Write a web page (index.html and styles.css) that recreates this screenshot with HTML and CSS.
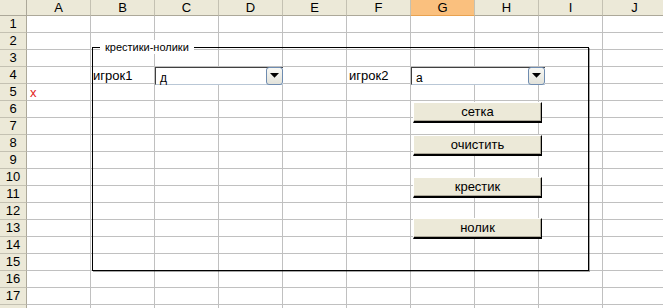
FILE: index.html
```html
<!DOCTYPE html>
<html>
<head>
<meta charset="utf-8">
<link rel="stylesheet" href="styles.css">
</head>
<body>
<div class="sheet">
  <div class="corner"></div>
  <div class="colhead">A</div>
  <div class="colhead">B</div>
  <div class="colhead">C</div>
  <div class="colhead">D</div>
  <div class="colhead">E</div>
  <div class="colhead">F</div>
  <div class="colhead active">G</div>
  <div class="colhead">H</div>
  <div class="colhead">I</div>
  <div class="colhead">J</div>

  <div class="rowheads">
    <div class="rowhead">1</div>
    <div class="rowhead">2</div>
    <div class="rowhead">3</div>
    <div class="rowhead">4</div>
    <div class="rowhead">5</div>
    <div class="rowhead">6</div>
    <div class="rowhead">7</div>
    <div class="rowhead">8</div>
    <div class="rowhead">9</div>
    <div class="rowhead">10</div>
    <div class="rowhead">11</div>
    <div class="rowhead">12</div>
    <div class="rowhead">13</div>
    <div class="rowhead">14</div>
    <div class="rowhead">15</div>
    <div class="rowhead">16</div>
    <div class="rowhead">17</div>
    <div class="rowhead"></div>
  </div>

  <div class="cells">
    <div class="cell b4">игрок1</div>
    <div class="cell f4">игрок2</div>
    <div class="cell a5 red">x</div>

    <div class="groupbox">
      <span class="legend">крестики-нолики</span>
    </div>

    <div class="combo combo1">
      <span class="combo-text">д</span>
      <span class="drop"><svg width="9" height="5" viewBox="0 0 9 5"><path d="M0 0H9L4.5 4.8Z" fill="#000"/></svg></span>
    </div>
    <div class="combo combo2">
      <span class="combo-text">а</span>
      <span class="drop"><svg width="9" height="5" viewBox="0 0 9 5"><path d="M0 0H9L4.5 4.8Z" fill="#000"/></svg></span>
    </div>

    <div class="btn btn1">сетка</div>
    <div class="btn btn2">очистить</div>
    <div class="btn btn3">крестик</div>
    <div class="btn btn4">нолик</div>
  </div>
</div>
</body>
</html>
```

FILE: styles.css
```css
html, body {
  margin: 0;
  padding: 0;
  background: #fff;
  overflow: hidden;
}
body {
  width: 663px;
  height: 308px;
  font-family: "Liberation Sans", Arial, sans-serif;
  font-size: 13px;
  color: #000;
}
.sheet {
  display: grid;
  grid-template-columns: 27px repeat(10, 64px);
  grid-template-rows: 16px 306px;
  width: 667px;
}
.corner {
  background: #ECE9D8;
  border-right: 1px solid #ACA899;
  border-bottom: 1px solid #ACA899;
  box-sizing: border-box;
}
.colhead {
  background: #ECE9D8;
  border-right: 1px solid #C4C1B2;
  border-bottom: 1px solid #ACA899;
  box-sizing: border-box;
  text-align: center;
  line-height: 15px;
  font-size: 13px;
}
.colhead.active {
  background: #FAC07E;
  border-bottom-color: #E8A250;
}
.rowheads {
  display: grid;
  grid-template-rows: repeat(18, 17px);
}
.rowhead {
  background: #ECE9D8;
  border-right: 1px solid #ACA899;
  border-bottom: 1px solid #C4C1B2;
  box-sizing: border-box;
  text-align: center;
  line-height: 16px;
  font-size: 13px;
}
.cells {
  grid-column: 2 / span 10;
  position: relative;
  display: grid;
  grid-template-columns: repeat(10, 64px);
  grid-template-rows: repeat(18, 17px);
  background-image:
    linear-gradient(to right, transparent 63px, #C0C0C0 63px),
    linear-gradient(to bottom, transparent 16px, #C0C0C0 16px);
  background-size: 64px 17px, 64px 17px;
}
.cell {
  display: flex;
  align-items: flex-end;
  padding-left: 2px;
  padding-bottom: 1px;
  line-height: 15px;
  white-space: nowrap;
}
.b4 { grid-column: 2; grid-row: 4; }
.f4 { grid-column: 6; grid-row: 4; }
.a5 { grid-column: 1; grid-row: 5; }
.red { color: #E2231A; padding-left: 3px; }

.groupbox {
  position: absolute;
  left: 65px;
  top: 31px;
  width: 497px;
  height: 224px;
  border: 1px solid #000;
  box-shadow: 1px 1px 0 rgba(0,0,0,0.35);
  box-sizing: border-box;
}
.legend {
  position: absolute;
  left: 7px;
  top: -8px;
  padding: 0 5px 0 5px;
  background: #fff;
  font-size: 11px;
  line-height: 14px;
}

.combo {
  position: absolute;
  top: 51px;
  height: 18px;
  background: #fff;
  border-top: 1px solid #404040;
  border-left: 1px solid #404040;
  border-bottom: 1px solid #B9C7D6;
  box-sizing: border-box;
  display: flex;
  align-items: center;
  justify-content: space-between;
}
.combo1 { left: 128px; width: 128px; }
.combo2 { left: 384px; width: 134px; }
.combo-text {
  padding-left: 4px;
  padding-top: 3px;
  font-size: 12px;
}
.drop {
  width: 17px;
  height: 18px;
  margin-top: -1px;
  box-sizing: border-box;
  border: 1px solid #6F8CB0;
  border-radius: 3px;
  background: linear-gradient(#F8F8F4, #E2E2DA);
  display: flex;
  align-items: center;
  justify-content: center;
}

.btn {
  position: absolute;
  left: 386px;
  width: 129px;
  height: 21px;
  box-sizing: border-box;
  background: #ECE9D8;
  border-top: 1px solid #fff;
  border-left: 1px solid #fff;
  border-right: 1px solid #000;
  border-bottom: 2px solid #000;
  box-shadow: inset -1px -1px 0 #ACA899;
  text-align: center;
  line-height: 18px;
  font-size: 13px;
}
.btn1 { top: 86px; }
.btn2 { top: 119px; }
.btn3 { top: 161px; }
.btn4 { top: 202px; }
```
